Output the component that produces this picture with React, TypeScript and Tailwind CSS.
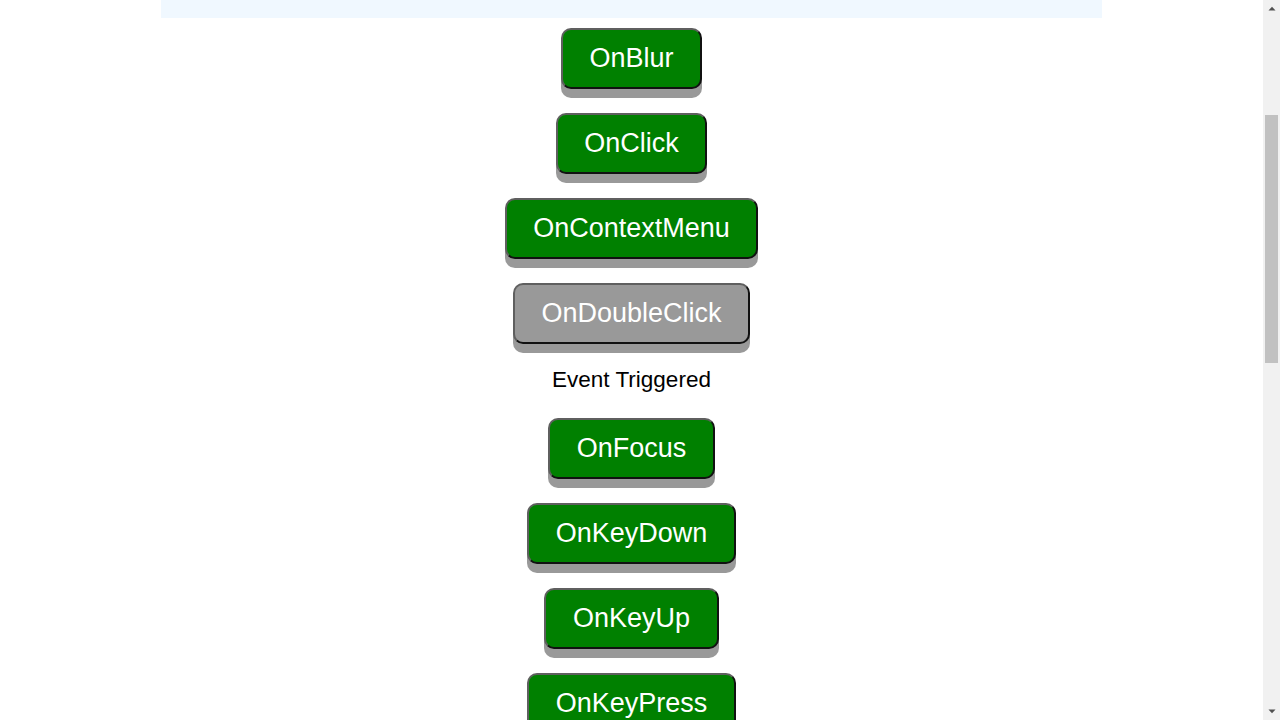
import React from "react";

const items: { label: string; gray?: boolean; after?: string }[] = [
  { label: "OnBlur" },
  { label: "OnClick" },
  { label: "OnContextMenu" },
  { label: "OnDoubleClick", gray: true, after: "Event Triggered" },
  { label: "OnFocus" },
  { label: "OnKeyDown" },
  { label: "OnKeyUp" },
  { label: "OnKeyPress" },
];

function EventButton({ label, gray }: { label: string; gray?: boolean }) {
  return (
    <button
      className={
        gray
          ? "rounded-[10px] border-2 border-t-[#5f5f5f] border-l-[#5f5f5f] border-b-[#111111] border-r-[#111111] bg-[#999999] px-[26.5px] pt-[12.5px] pb-[13.5px] text-[27px] leading-[31px] text-white shadow-[0_9px_0_#999999] [font-family:'Liberation_Sans',Arial,sans-serif]"
          : "rounded-[10px] border-2 border-t-[#5f5f5f] border-l-[#5f5f5f] border-b-[#111111] border-r-[#111111] bg-[#008000] px-[26.5px] pt-[12.5px] pb-[13.5px] text-[27px] leading-[31px] text-white shadow-[0_9px_0_#999999] [font-family:'Liberation_Sans',Arial,sans-serif]"
      }
    >
      {label}
    </button>
  );
}

export default function App() {
  return (
    <div className="flex h-[720px] w-[1280px] overflow-hidden bg-white [font-family:'Liberation_Sans',Arial,sans-serif]">
      <div className="flex w-[1263px] flex-col items-center">
        <div className="h-[18px] w-[941px] shrink-0 bg-[#f0f8ff]" />
        <div className="mt-[10px] flex flex-col items-center gap-[24px]">
          {items.map((it) => (
            <React.Fragment key={it.label}>
              <EventButton label={it.label} gray={it.gray} />
              {it.after && (
                <div className="h-[26px] text-[22.5px] leading-[23px] text-black">{it.after}</div>
              )}
            </React.Fragment>
          ))}
        </div>
      </div>
      <div className="flex h-full w-[17px] shrink-0 flex-col bg-[#f1f1f1]">
        <div className="flex h-[17px] items-center justify-center">
          <svg width="8" height="5" viewBox="0 0 8 5">
            <path d="M0.5 4.5 L4 0.8 L7.5 4.5 Z" fill="#505050" />
          </svg>
        </div>
        <div className="ml-[2px] mt-[98px] h-[248px] w-[13px] bg-[#c1c1c1]" />
        <div className="flex-1" />
        <div className="flex h-[17px] items-center justify-center">
          <svg width="8" height="5" viewBox="0 0 8 5">
            <path d="M0.5 0.5 L4 4.2 L7.5 0.5 Z" fill="#505050" />
          </svg>
        </div>
      </div>
    </div>
  );
}
